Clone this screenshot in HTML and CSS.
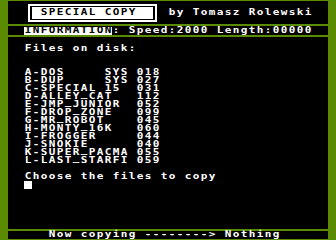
FILE: index.html
```html
<!DOCTYPE html>
<html>
<head>
<meta charset="utf-8">
<link rel="stylesheet" href="styles.css">
</head>
<body>
<div class="screen">
  <div class="header">
    <div class="titlebox"><div class="titlefill"><div class="ln ink"><span class="tx">SPECIAL COPY</span></div></div></div>
    <div class="ln byline"><span class="tx">by Tomasz Rolewski</span></div>
  </div>
  <div class="info">
    <div class="ln"><span class="inv"><span class="tx">INFORMATION</span></span><span class="tx">: Speed:2000 Length:00000</span></div>
  </div>
  <div class="main">
    <div class="ln"></div>
    <div class="ln"><span class="tx">Files on disk:</span></div>
    <div class="ln"></div>
    <div class="ln"></div>
    <div class="ln"><span class="tx">A-DOS     SYS 018</span></div>
    <div class="ln"><span class="tx">B-DUP     SYS 027</span></div>
    <div class="ln"><span class="tx">C-SPECIAL 15  031</span></div>
    <div class="ln"><span class="tx">D-ALLEY<span class="us">_</span>CAT   112</span></div>
    <div class="ln"><span class="tx">E-JMP<span class="us">_</span>JUNIOR  052</span></div>
    <div class="ln"><span class="tx">F-DROP<span class="us">_</span>ZONE   099</span></div>
    <div class="ln"><span class="tx">G-MR<span class="us">_</span>ROBOT    045</span></div>
    <div class="ln"><span class="tx">H-MONTY<span class="us">_</span>16K   060</span></div>
    <div class="ln"><span class="tx">I-FROGGER     044</span></div>
    <div class="ln"><span class="tx">J-SNOKIE      040</span></div>
    <div class="ln"><span class="tx">K-SUPER<span class="us">_</span>PACMA 055</span></div>
    <div class="ln"><span class="tx">L-LAST<span class="us">_</span>STARFI 059</span></div>
    <div class="ln"></div>
    <div class="ln"><span class="tx">Choose the files to copy</span></div>
    <div class="ln"><span class="inv cursor"></span></div>
  </div>
  <div class="status">
    <div class="ln"><span class="tx">Now copying --------&gt; Nothing</span></div>
  </div>
</div>
</body>
</html>
```
FILE: styles.css
```css
html, body {
  margin: 0;
  padding: 0;
}
body {
  background: #5b8b00;
  padding: 1px 8px;
  width: 336px;
  height: 240px;
  box-sizing: border-box;
  overflow: hidden;
}
.screen {
  width: 320px;
  display: flex;
  flex-direction: column;
  gap: 2px;
}
.header {
  background: #000;
  height: 23px;
  box-sizing: border-box;
  padding-top: 3px;
  display: flex;
  align-items: flex-start;
}
.titlebox {
  margin-left: 20px;
  border: 2px solid #fff;
  padding: 1px 2px;
  background: #000;
}
.titlefill {
  background: #fff;
  width: 121px;
  height: 12px;
  box-sizing: border-box;
  padding: 2px 17px 2px 8px;
}
.byline {
  margin-left: 11px;
  margin-top: 5px;
}
.info {
  background: #000;
  height: 9px;
  box-sizing: border-box;
  padding: 1px 0 0 16px;
}
.main {
  background: #000;
  height: 192px;
  box-sizing: border-box;
  padding-left: 16px;
}
.status {
  background: #000;
  height: 8px;
  padding-left: 40px;
}
.ln {
  height: 8px;
  line-height: 8px;
  white-space: pre;
  font-family: "DejaVu Sans Mono", monospace;
  font-weight: bold;
  font-size: 11px;
  letter-spacing: 1.377px;
  color: #fff;
}
.ink {
  color: #000;
}
.tx {
  display: inline-block;
  transform-origin: 0 4.59px;
  transform: translateX(0.7px) scaleY(0.748);
}
.us {
  display: inline-block;
  transform: translateY(-2.6px);
}
.inv {
  display: inline-block;
  vertical-align: top;
  height: 8px;
  background: #fff;
  color: #000;
}
.cursor {
  width: 8px;
}
```
